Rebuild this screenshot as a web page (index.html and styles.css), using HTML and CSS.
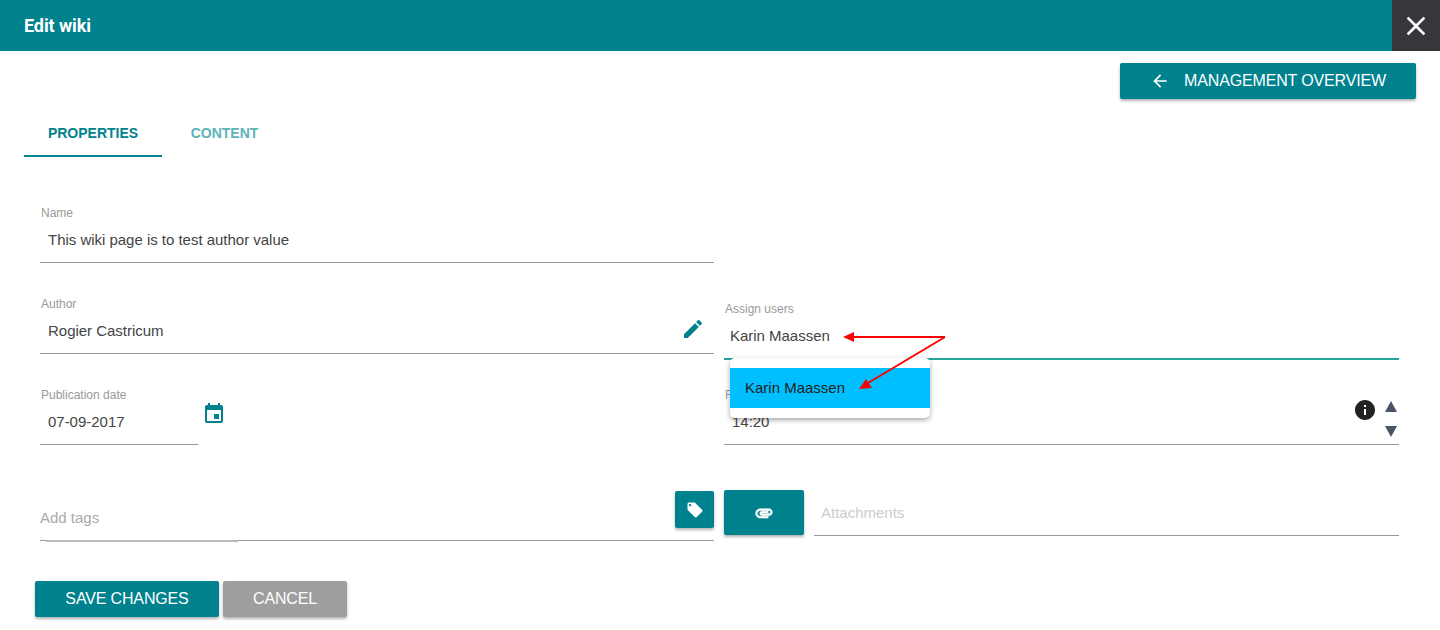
FILE: index.html
```html
<!DOCTYPE html>
<html lang="en">
<head>
    <meta charset="UTF-8">
    <title>Edit wiki</title>
    <link rel="stylesheet" href="styles.css">
</head>
<body>
    <div class="page">
        <div class="topbar">
            <div class="topbar-title">Edit wiki</div>
            <button class="close-btn">
                <svg width="32" height="32" viewBox="0 0 24 24"><path d="M19 6.41L17.59 5 12 10.59 6.41 5 5 6.41 10.59 12 5 17.59 6.41 19 12 13.41 17.59 19 19 17.59 13.41 12z"/></svg>
            </button>
        </div>

        <div class="toolbar">
            <button class="btn btn-overview">
                <svg width="20" height="20" viewBox="0 0 24 24"><path d="M20 11H7.83l5.59-5.59L12 4l-8 8 8 8 1.41-1.41L7.83 13H20v-2z"/></svg>
                <span>MANAGEMENT OVERVIEW</span>
            </button>
        </div>

        <div class="tabs">
            <div class="tab tab-active">PROPERTIES</div>
            <div class="tab">CONTENT</div>
        </div>

        <div class="form">
            <div class="field">
                <div class="field-label">Name</div>
                <div class="field-value">This wiki page is to test author value</div>
            </div>
            <div></div>

            <div class="field">
                <div class="field-label">Author</div>
                <div class="field-value">
                    <span class="grow">Rogier Castricum</span>
                    <svg class="icon-edit" width="24" height="24" viewBox="0 0 24 24"><path d="M3 17.25V21h3.75L17.81 9.94l-3.75-3.75L3 17.25zM20.71 7.04c.39-.39.39-1.02 0-1.41l-2.34-2.34c-.39-.39-1.02-.39-1.41 0l-1.83 1.83 3.75 3.75 1.83-1.83z"/></svg>
                </div>
            </div>
            <div class="field field-assign">
                <div class="field-label">Assign users</div>
                <div class="field-value">Karin Maassen</div>
                <div class="dropdown">
                    <div class="dropdown-item">Karin Maassen</div>
                </div>
            </div>

            <div class="date-row">
                <div class="field field-date">
                    <div class="field-label">Publication date</div>
                    <div class="field-value">07-09-2017</div>
                </div>
                <svg class="icon-date" width="24" height="24" viewBox="0 0 24 24"><path d="M17 12h-5v5h5v-5zM16 1v2H8V1H6v2H5c-1.11 0-1.99.9-1.99 2L3 19c0 1.1.89 2 2 2h14c1.1 0 2-.9 2-2V5c0-1.1-.9-2-2-2h-1V1h-2zm3 18H5V8h14v11z"/></svg>
            </div>
            <div class="field">
                <div class="field-label">F</div>
                <div class="field-value">
                    <span class="grow">14:20</span>
                    <svg class="icon-info" width="24" height="24" viewBox="0 0 24 24"><path d="M12 2C6.48 2 2 6.48 2 12s4.48 10 10 10 10-4.48 10-10S17.52 2 12 2zm1 15h-2v-6h2v6zm0-8h-2V7h2v2z"/></svg>
                    <div class="spinner">
                        <svg width="12" height="11" viewBox="0 0 12 11"><path d="M6 0l6 11H0z"/></svg>
                        <svg width="12" height="11" viewBox="0 0 12 11"><path d="M0 0h12L6 11z"/></svg>
                    </div>
                </div>
            </div>

            <div class="tags">
                <span class="grow placeholder">Add tags</span>
                <button class="btn btn-tag">
                    <svg width="18" height="18" viewBox="0 0 24 24"><path d="M21.41 11.58l-9-9C12.05 2.22 11.55 2 11 2H4c-1.1 0-2 .9-2 2v7c0 .55.22 1.05.59 1.42l9 9c.36.36.86.58 1.41.58.55 0 1.05-.22 1.41-.59l7-7c.37-.36.59-.86.59-1.41 0-.55-.23-1.06-.59-1.42zM5.5 7C4.67 7 4 6.33 4 5.5S4.67 4 5.5 4 7 4.67 7 5.5 6.33 7 5.5 7z"/></svg>
                </button>
            </div>
            <div class="attachments">
                <button class="btn btn-attach">
                    <svg width="20" height="20" viewBox="0 0 24 24"><path d="M2 12.5C2 9.46 4.46 7 7.5 7H18c2.21 0 4 1.79 4 4s-1.79 4-4 4H9.5C8.12 15 7 13.88 7 12.5S8.12 10 9.5 10H17v2H9.41c-.55 0-.55 1 0 1H18c1.1 0 2-.9 2-2s-.9-2-2-2H7.5C5.57 9 4 10.57 4 12.5S5.57 16 7.5 16H17v2H7.5C4.46 18 2 15.54 2 12.5z"/></svg>
                </button>
                <div class="attach-input">Attachments</div>
            </div>
        </div>

        <div class="actions">
            <button class="btn btn-save">SAVE CHANGES</button>
            <button class="btn btn-cancel">CANCEL</button>
        </div>

        <!-- rode pijlen uit de screenshot -->
        <svg class="annotation" width="1440" height="630" viewBox="0 0 1440 630">
            <path d="M945 337H850M945 337L868 383" fill="none" stroke="#f00" stroke-width="2"/>
            <path d="M843 337l11-5v10z" fill="#f00"/>
            <path d="M859 389l7-10 6 9z" fill="#f00"/>
        </svg>
    </div>
</body>
</html>
```

FILE: styles.css
```css
* {
    margin: 0;
    padding: 0;
    box-sizing: border-box;
    font-family: "Liberation Sans", Arial, sans-serif;
}

body {
    background-color: #fff;
    color: #444;
    overflow: hidden;
}

button {
    border: none;
}

.page {
    position: relative;
    width: 1440px;
    height: 630px;
}

.grow {
    flex: 1;
}

/* bovenbalk */
.topbar {
    display: flex;
    align-items: center;
    justify-content: space-between;
    height: 51px;
    padding-left: 24px;
    background-color: #00818e;
}

.topbar-title {
    font-family: Roboto, sans-serif;
    font-size: 18px;
    font-weight: 700;
    letter-spacing: -0.1px;
    color: #fff;
}

.close-btn {
    display: flex;
    align-items: center;
    justify-content: center;
    width: 48px;
    height: 51px;
    background-color: #37373b;
}

.close-btn svg {
    fill: #fff;
}

/* knoppen */
.btn {
    display: flex;
    align-items: center;
    justify-content: center;
    background-color: #00818e;
    color: #fff;
    border-radius: 2px;
    font-size: 16px;
    letter-spacing: -0.15px;
    box-shadow: 0 2px 3px rgba(0, 0, 0, 0.3);
}

.btn svg {
    fill: #fff;
}

.toolbar {
    display: flex;
    justify-content: flex-end;
    padding: 12px 24px 0 0;
}

.btn-overview {
    width: 296px;
    height: 36px;
    gap: 14px;
}

/* tabs */
.tabs {
    display: flex;
    margin: 21px 0 0 24px;
}

.tab {
    width: 125px;
    height: 37px;
    padding-top: 5px;
    text-align: center;
    font-size: 14px;
    font-weight: 700;
    color: #60b3bb;
}

.tab-active {
    width: 138px;
    color: #00818e;
    border-bottom: 2px solid #00818e;
}

/* formulier */
.form {
    display: grid;
    grid-template-columns: 674px 675px;
    column-gap: 10px;
    row-gap: 34px;
    padding: 49px 0 0 40px;
}

.field {
    position: relative;
}

.field-label {
    height: 14px;
    padding-left: 1px;
    font-size: 12px;
    line-height: 14px;
    color: #999;
}

.field-value {
    display: flex;
    align-items: center;
    height: 43px;
    padding: 0 0 4px 8px;
    font-size: 15px;
    letter-spacing: -0.02px;
    border-bottom: 1px solid #999;
}

.field-assign {
    margin-top: 5px;
    margin-bottom: -6px;
}

.field-assign .field-value {
    height: 44px;
    padding: 0 0 3px 6px;
    border-bottom: 2px solid #26a69a;
}

.dropdown {
    position: absolute;
    top: 56px;
    left: 6px;
    width: 200px;
    padding: 10px 0;
    background-color: #fff;
    border-radius: 5px;
    box-shadow: 0 2px 5px rgba(0, 0, 0, 0.35);
    z-index: 2;
}

.dropdown-item {
    height: 40px;
    padding-left: 15px;
    line-height: 40px;
    font-size: 15px;
    background-color: #00bfff;
    color: #222;
}

.date-row {
    display: flex;
}

.field-date {
    width: 158px;
}

.icon-edit {
    margin: -2px 9px 0 0;
    fill: #00818e;
}

.icon-date {
    margin: 14px 0 0 4px;
    fill: #00818e;
}

.icon-info {
    margin: -22px 8px 0 0;
    fill: #222;
}

.spinner {
    display: flex;
    flex-direction: column;
    gap: 14px;
    margin: -4px 2px 0 0;
}

.spinner svg {
    fill: #4a5568;
}

/* tags en bijlagen */
.tags {
    position: relative;
    display: flex;
    align-items: flex-start;
    height: 58px;
    margin-top: 4px;
    border-bottom: 1px solid #999;
}

.tags::after {
    content: "";
    position: absolute;
    left: 6px;
    bottom: -2px;
    width: 192px;
    height: 2px;
    background-color: #bbb;
}

.placeholder {
    margin-top: 25px;
    font-size: 15px;
    line-height: 20px;
    color: #aaa;
}

.btn-tag {
    width: 39px;
    height: 37px;
    margin-top: 8px;
}

.attachments {
    display: flex;
    gap: 10px;
    height: 47px;
    margin-top: 11px;
    margin-bottom: -5px;
}

.btn-attach {
    width: 80px;
    height: 45px;
}

.btn-attach svg {
    stroke: #fff;
    stroke-width: 0.8;
}

.attach-input {
    flex: 1;
    height: 46px;
    padding: 14px 0 0 7px;
    font-size: 15px;
    color: #ccc;
    border-bottom: 1px solid #999;
}

.actions {
    display: flex;
    gap: 4px;
    padding: 40px 0 0 35px;
}

.btn-save {
    width: 184px;
    height: 36px;
}

.btn-cancel {
    width: 124px;
    height: 36px;
    background-color: #9e9e9e;
}

/* overlay met pijlen */
.annotation {
    position: absolute;
    top: 0;
    left: 0;
    z-index: 3;
    pointer-events: none;
}
```
